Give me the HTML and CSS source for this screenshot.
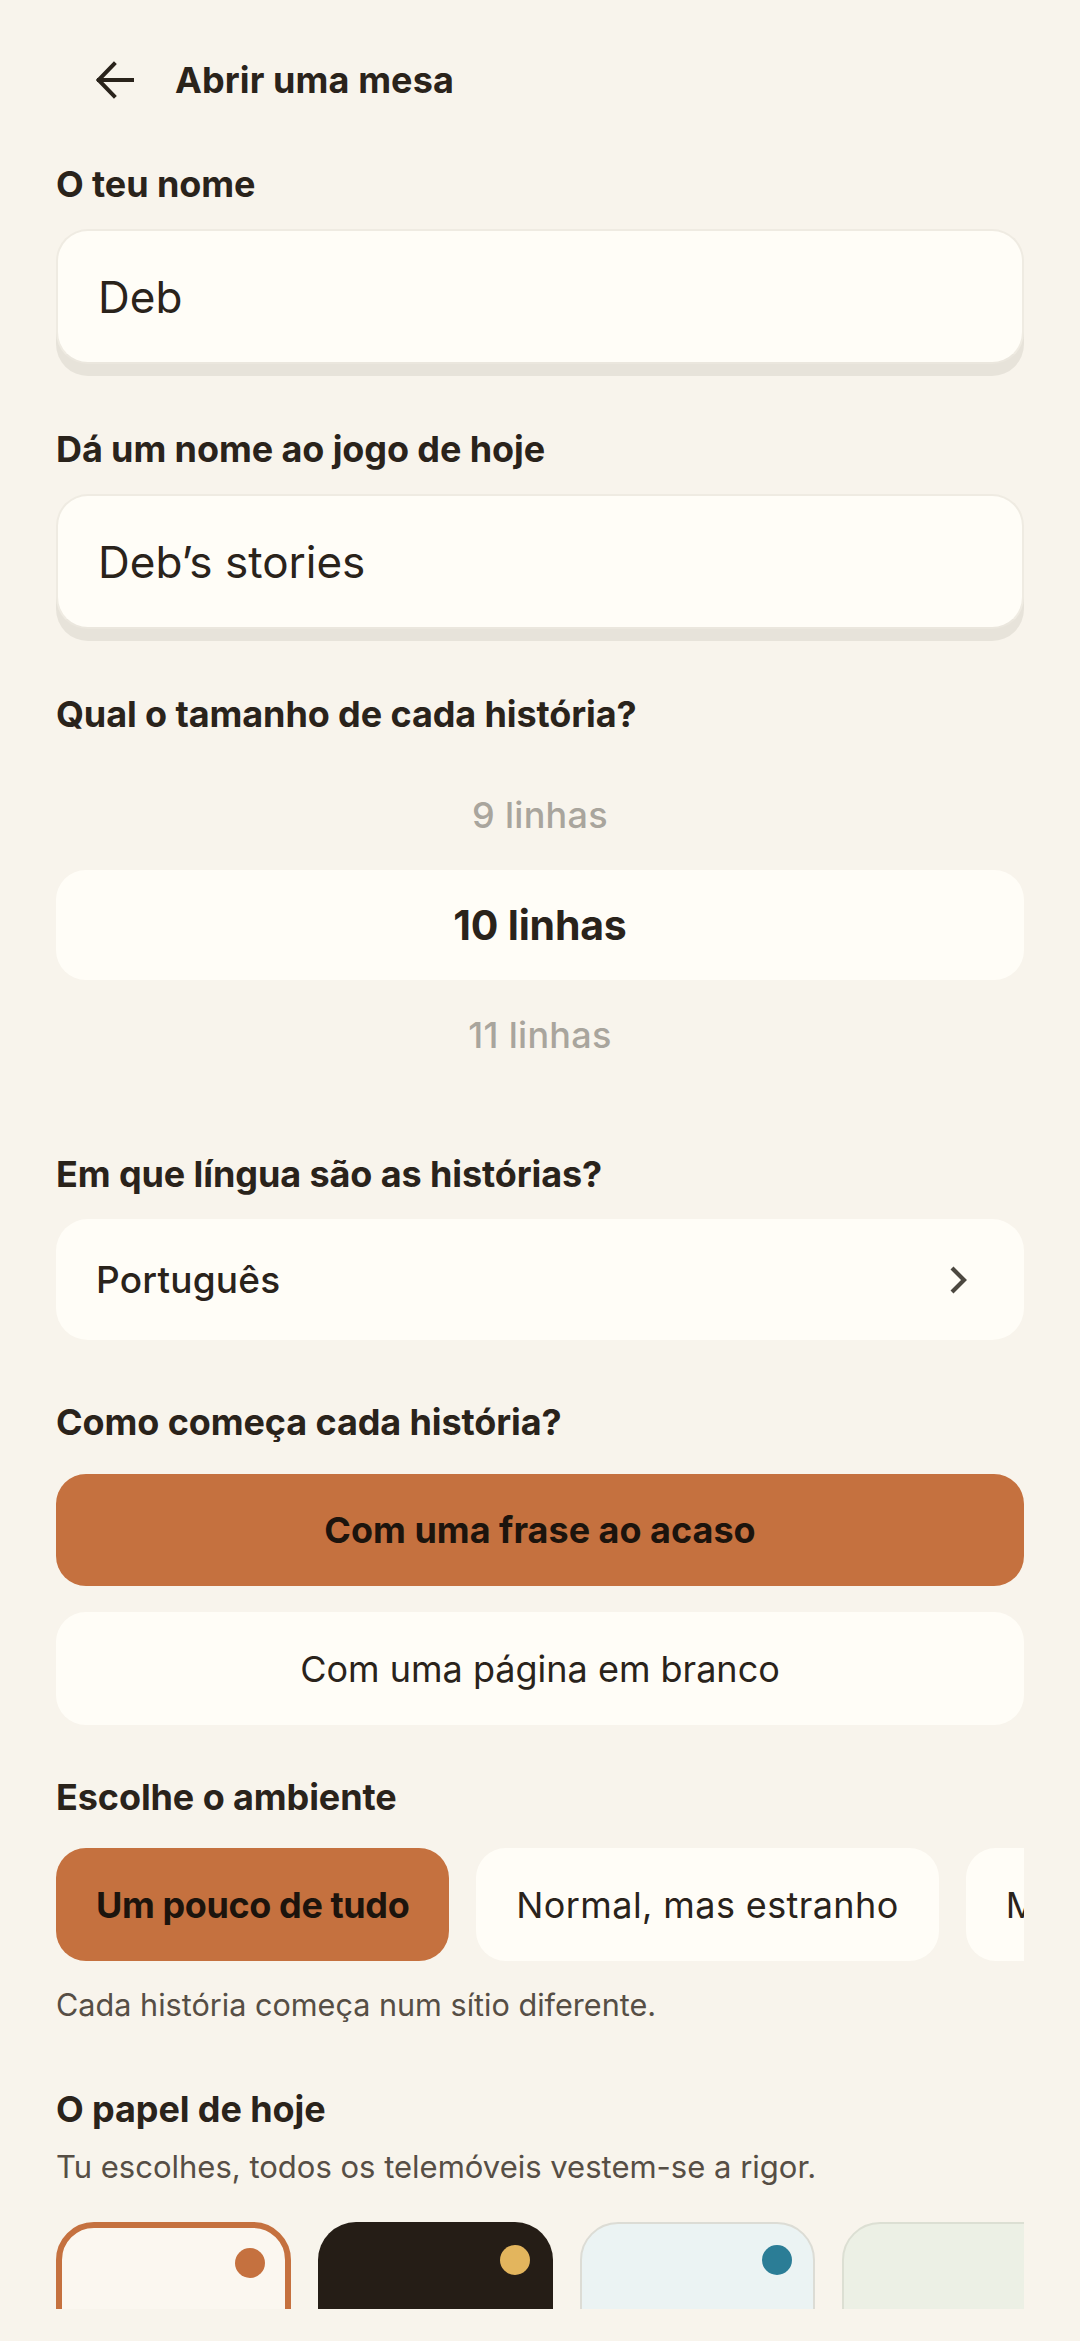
FILE: index.html
```html
<!DOCTYPE html>
<html lang="pt">
<head>
<meta charset="utf-8">
<title>Abrir uma mesa</title>
<link rel="stylesheet" href="styles.css">
</head>
<body>
<main class="page">
  <header class="header">
    <svg class="back" width="38" height="38" viewBox="0 0 38 38" aria-hidden="true">
      <path d="M36 19H3M18 3L2.5 19L18 35" fill="none" stroke="#2a231b" stroke-width="4" stroke-linecap="square"/>
    </svg>
    <h1 class="title">Abrir uma mesa</h1>
  </header>

  <div class="label label-first">O teu nome</div>
  <div class="input">Deb</div>

  <div class="label label-after-input">Dá um nome ao jogo de hoje</div>
  <div class="input">Deb’s stories</div>

  <div class="label label-after-input">Qual o tamanho de cada história?</div>
  <div class="picker">
    <div class="pick-row dim">9 linhas</div>
    <div class="pick-row selected">10 linhas</div>
    <div class="pick-row dim">11 linhas</div>
  </div>

  <div class="label label-after-picker">Em que língua são as histórias?</div>
  <div class="select-row">
    <span class="select-text">Português</span>
    <svg class="chev" width="22" height="30" viewBox="0 0 22 30" aria-hidden="true">
      <path d="M4 3L16 15L4 27" fill="none" stroke="#4c4840" stroke-width="4.2"/>
    </svg>
  </div>

  <div class="label label-after-select">Como começa cada história?</div>
  <div class="option option-on">Com uma frase ao acaso</div>
  <div class="option option-off">Com uma página em branco</div>

  <div class="label label-after-option">Escolhe o ambiente</div>
  <div class="chips">
    <div class="chip chip-on">Um pouco de tudo</div>
    <div class="chip">Normal, mas estranho</div>
    <div class="chip">Mistério total</div>
  </div>
  <p class="helper">Cada história começa num sítio diferente.</p>

  <div class="label label-after-helper">O papel de hoje</div>
  <p class="helper sub">Tu escolhes, todos os telemóveis vestem-se a rigor.</p>
  <div class="papers">
    <div class="paper paper-cream"><span class="dot dot-orange"></span></div>
    <div class="paper paper-dark"><span class="dot dot-yellow"></span></div>
    <div class="paper paper-blue"><span class="dot dot-teal"></span></div>
    <div class="paper paper-green"><span class="dot dot-green"></span></div>
  </div>
</main>
</body>
</html>
```
FILE: styles.css
```css
* { box-sizing: border-box; }
html, body { margin: 0; padding: 0; }
body {
  background: #f8f4ec;
  color: #2a231b;
  font-family: Inter, "Noto Sans", sans-serif;
  width: 1080px;
  min-height: 2341px;
}
.page {
  padding: 30px 56px 0 56px;
  display: flex;
  flex-direction: column;
}
.header {
  height: 100px;
  display: flex;
  align-items: center;
}
.back { margin-left: 40px; flex: none; }
.title {
  margin: 0 0 0 41px;
  font-size: 36px;
  font-weight: 700;
  line-height: 44px;
  letter-spacing: 0.1px;
}
.label {
  font-size: 36px;
  font-weight: 700;
  line-height: 44px;
  letter-spacing: -0.1px;
}
.label-first { margin-top: 32px; }
.label-after-input { margin-top: 63px; }
.label-after-picker { margin-top: 62px; }
.label-after-select { margin-top: 60px; }
.label-after-option { margin-top: 50px; }
.label-after-helper { margin-top: 64px; }

.input {
  margin-top: 23px;
  height: 135px;
  background: #fffdf7;
  border: 2px solid #efebe2;
  border-bottom-color: #ebe7de;
  border-radius: 32px;
  box-shadow: 0 12px 0 #e7e3da;
  display: flex;
  align-items: center;
  padding-left: 40px;
  font-size: 44px;
  font-weight: 400;
}

.picker {
  margin-top: 24px;
  display: flex;
  flex-direction: column;
}
.pick-row {
  height: 110px;
  display: flex;
  align-items: center;
  justify-content: center;
}
.dim {
  color: #a9a59d;
  font-size: 36px;
  font-weight: 500;
  letter-spacing: 0.3px;
}
.selected {
  background: #fffdf7;
  border-radius: 30px;
  font-size: 41px;
  font-weight: 700;
  letter-spacing: -0.2px;
}

.select-row {
  margin-top: 23px;
  height: 121px;
  background: #fffdf7;
  border-radius: 32px;
  display: flex;
  align-items: center;
  justify-content: space-between;
  padding: 0 54px 0 40px;
}
.select-text {
  font-size: 37px;
  font-weight: 500;
  letter-spacing: 0.2px;
}
.chev { flex: none; }

.option {
  height: 113px;
  border-radius: 30px;
  display: flex;
  align-items: center;
  justify-content: center;
  font-size: 36px;
}
.option-on {
  margin-top: 30px;
  height: 112px;
  background: #c5713f;
  color: #1c140d;
  font-weight: 700;
}
.option-off {
  margin-top: 26px;
  background: #fffdf7;
  font-weight: 400;
}

.chips {
  margin-top: 29px;
  height: 113px;
  display: flex;
  gap: 27px;
  overflow: hidden;
}
.chip {
  flex: none;
  height: 113px;
  padding: 0 40px;
  border-radius: 30px;
  background: #fffdf7;
  display: flex;
  align-items: center;
  font-size: 36px;
  font-weight: 400;
  letter-spacing: 0.4px;
  white-space: nowrap;
}
.chip-on {
  background: #c5713f;
  color: #1c140d;
  font-weight: 700;
  letter-spacing: -0.4px;
}

.helper {
  margin: 26px 0 0 0;
  font-size: 30.6px;
  line-height: 36px;
  color: #564e45;
}
.sub { margin-top: 18px; font-size: 31px; }

.papers {
  margin-top: 37px;
  height: 87px;
  display: flex;
  gap: 27px;
  overflow: hidden;
}
.paper {
  flex: none;
  position: relative;
  width: 235px;
  height: 300px;
  border-radius: 38px;
}
.paper-cream { background: #fbf7f0; border: 6px solid #c5713f; }
.paper-dark { background: #251d16; }
.paper-blue { background: #ebf3f3; border: 2px solid #dcdcd5; }
.paper-green { background: #ecf0e5; border: 2px solid #dcdfd3; }
.dot {
  position: absolute;
  width: 30px;
  height: 30px;
  border-radius: 50%;
  top: 23px;
  right: 23px;
}
.paper-cream .dot { top: 20px; right: 20px; }
.paper-blue .dot, .paper-green .dot { top: 21px; right: 21px; }
.dot-orange { background: #c5713f; }
.dot-yellow { background: #e3b55d; }
.dot-teal { background: #2b7d96; }
.dot-green { background: #5e8a4e; }
```
